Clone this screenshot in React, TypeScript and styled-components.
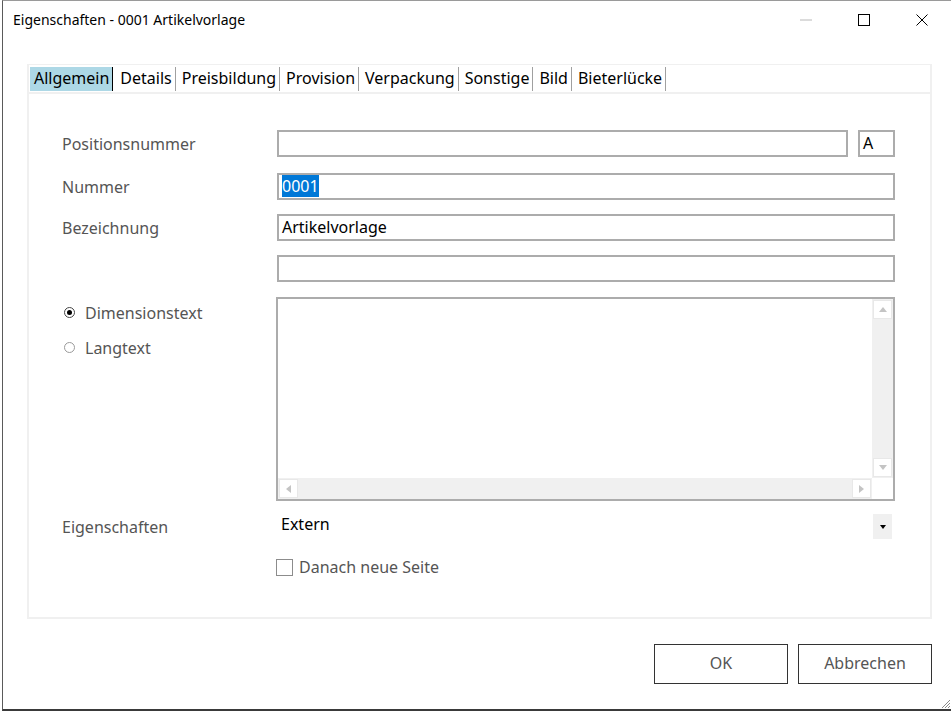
import React from "react";
import styled, { createGlobalStyle } from "styled-components";

const GlobalStyle = createGlobalStyle`
  html, body {
    margin: 0;
    padding: 0;
    background: #ffffff;
  }
  body {
    font-family: "Noto Sans", "Open Sans", sans-serif;
  }
`;

const tabs = [
  "Allgemein",
  "Details",
  "Preisbildung",
  "Provision",
  "Verpackung",
  "Sonstige",
  "Bild",
  "Bieterlücke"
];

export default function App() {
  return (
    <>
      <GlobalStyle />
      <Window>
        <TitleBar>
          <Title>Eigenschaften - 0001 Artikelvorlage</Title>
          <Controls>
            <Control>
              <svg width="12" height="2" viewBox="0 0 12 2">
                <line x1="0" y1="1" x2="12" y2="1" stroke="#b8b8b8" strokeWidth="1" />
              </svg>
            </Control>
            <Control>
              <svg width="12" height="12" viewBox="0 0 12 12">
                <rect x="0.5" y="0.5" width="11" height="11" fill="none" stroke="#000" strokeWidth="1" />
              </svg>
            </Control>
            <Control>
              <svg width="12" height="12" viewBox="0 0 12 12">
                <path d="M0.5 0.5 L11.5 11.5 M11.5 0.5 L0.5 11.5" stroke="#000" strokeWidth="1" />
              </svg>
            </Control>
          </Controls>
        </TitleBar>

        <Body>
          <Panel>
            <TabStrip>
              {tabs.map((t, i) => (
                <Tab key={t} $active={i === 0}>{t}</Tab>
              ))}
            </TabStrip>

            <Content>
              <Row>
                <Label>Positionsnummer</Label>
                <FieldGroup>
                  <TextBox $grow />
                  <TextBox $width={37}>A</TextBox>
                </FieldGroup>
              </Row>
              <Row $gap={16}>
                <Label>Nummer</Label>
                <TextBox><Selected>0001</Selected></TextBox>
              </Row>
              <Row $gap={14}>
                <Label>Bezeichnung</Label>
                <TextBox>Artikelvorlage</TextBox>
              </Row>
              <Row $gap={14}>
                <Label />
                <TextBox />
              </Row>

              <TextRow>
                <RadioList>
                  <RadioItem>
                    <Radio $checked />
                    Dimensionstext
                  </RadioItem>
                  <RadioItem>
                    <Radio />
                    Langtext
                  </RadioItem>
                </RadioList>
                <Memo>
                  <MemoText />
                  <VScroll>
                    <ArrowButton>
                      <svg width="8" height="5" viewBox="0 0 8 5"><path d="M4 0 L8 5 L0 5 Z" fill="#c4c4c4" /></svg>
                    </ArrowButton>
                    <ArrowButton>
                      <svg width="8" height="5" viewBox="0 0 8 5"><path d="M0 0 L8 0 L4 5 Z" fill="#c4c4c4" /></svg>
                    </ArrowButton>
                  </VScroll>
                  <HScroll>
                    <ArrowButton>
                      <svg width="5" height="8" viewBox="0 0 5 8"><path d="M5 0 L5 8 L0 4 Z" fill="#c4c4c4" /></svg>
                    </ArrowButton>
                    <ArrowButton>
                      <svg width="5" height="8" viewBox="0 0 5 8"><path d="M0 0 L5 4 L0 8 Z" fill="#c4c4c4" /></svg>
                    </ArrowButton>
                  </HScroll>
                  <Corner />
                </Memo>
              </TextRow>

              <ComboRow>
                <Label>Eigenschaften</Label>
                <Combo>
                  <ComboValue>Extern</ComboValue>
                  <ComboButton>
                    <svg width="6" height="4" viewBox="0 0 6 4"><path d="M0 0 L6 0 L3 4 Z" fill="#000" /></svg>
                  </ComboButton>
                </Combo>
              </ComboRow>

              <CheckRow>
                <Label />
                <CheckLabel>
                  <CheckBox />
                  Danach neue Seite
                </CheckLabel>
              </CheckRow>
            </Content>
          </Panel>
        </Body>

        <Footer>
          <Button>OK</Button>
          <Button>Abbrechen</Button>
        </Footer>

        <Grip>
          <svg width="11" height="11" viewBox="0 0 11 11">
            <path d="M10 2 L2 10 M10 5 L5 10 M10 8 L8 10" stroke="#8a8a8a" strokeWidth="1" />
          </svg>
        </Grip>
      </Window>
    </>
  );
}

const Window = styled.div`
  position: relative;
  box-sizing: border-box;
  margin-left: 2px;
  width: 949px;
  height: 711px;
  background: #ffffff;
  border-left: 1px solid #5a5a5a;
  border-top: 1px solid #9a9a9a;
  border-bottom: 2px solid #3a3a3a;
  display: flex;
  flex-direction: column;
`;

const TitleBar = styled.div`
  height: 38px;
  display: flex;
  align-items: center;
  justify-content: space-between;
  padding-left: 10px;
`;

const Title = styled.div`
  font-size: 14px;
  color: #000;
  margin-top: -2px;
`;

const Controls = styled.div`
  display: flex;
  align-self: stretch;
`;

const Control = styled.div`
  width: 58px;
  display: flex;
  align-items: center;
  justify-content: center;
`;

const Body = styled.div`
  padding: 25px 20px 0 24px;
`;

const Panel = styled.div`
  box-sizing: border-box;
  width: 905px;
  height: 555px;
  border: 2px solid #f0f0f0;
  border-top-width: 1px;
  display: flex;
  flex-direction: column;
`;

const TabStrip = styled.div`
  display: flex;
  align-items: flex-start;
  height: 29px;
  padding-left: 1px;
  padding-top: 2px;
  box-sizing: border-box;
  border-bottom: 2px solid #f0f0f0;
`;

const Tab = styled.div<{ $active?: boolean }>`
  height: 24px;
  line-height: 22px;
  padding: 0 3px 0 4px;
  font-size: 16px;
  color: #000;
  background: ${p => (p.$active ? "#add8e6" : "transparent")};
  border-right: 1px solid ${p => (p.$active ? "#000" : "#a0a0a0")};
  margin-right: ${p => (p.$active ? 3 : 2)}px;
`;

const Content = styled.div`
  padding: 36px 34px 0 33px;
  display: flex;
  flex-direction: column;
`;

const Row = styled.div<{ $gap?: number }>`
  display: grid;
  grid-template-columns: 215px 618px;
  align-items: center;
  margin-top: ${p => p.$gap ?? 0}px;
`;

const Label = styled.div`
  font-size: 16px;
  color: #555555;
`;

const FieldGroup = styled.div`
  display: flex;
  gap: 10px;
`;

const TextBox = styled.div<{ $grow?: boolean; $width?: number }>`
  box-sizing: border-box;
  height: 27px;
  ${p => (p.$width ? `width: ${p.$width}px;` : "")}
  ${p => (p.$grow ? "flex: 1;" : "")}
  border: 2px solid #acacac;
  background: #fff;
  font-size: 16px;
  line-height: 23px;
  color: #000;
  padding-left: 3px;
  white-space: nowrap;
  overflow: hidden;
`;

const Selected = styled.span`
  background: #0078d7;
  color: #fff;
`;

const TextRow = styled.div`
  display: grid;
  grid-template-columns: 214px 619px;
  margin-top: 15px;
`;

const RadioList = styled.div`
  display: flex;
  flex-direction: column;
  gap: 12px;
  padding-top: 4px;
  padding-left: 2px;
`;

const RadioItem = styled.div`
  display: flex;
  align-items: center;
  gap: 10px;
  font-size: 16px;
  color: #555555;
  height: 23px;
`;

const Radio = styled.span<{ $checked?: boolean }>`
  box-sizing: border-box;
  width: 11px;
  height: 11px;
  border-radius: 50%;
  border: 1px solid ${p => (p.$checked ? "#444" : "#9a9a9a")};
  display: inline-flex;
  align-items: center;
  justify-content: center;
  &::after {
    content: "";
    width: 5px;
    height: 5px;
    border-radius: 50%;
    background: ${p => (p.$checked ? "#000" : "transparent")};
  }
`;

const Memo = styled.div`
  box-sizing: border-box;
  height: 204px;
  border: 2px solid #acacac;
  display: grid;
  grid-template-columns: 1fr 21px;
  grid-template-rows: 1fr 21px;
`;

const MemoText = styled.div`
  background: #fff;
`;

const VScroll = styled.div`
  background: #f0f0f0;
  display: flex;
  flex-direction: column;
  justify-content: space-between;
  padding: 1px;
`;

const HScroll = styled.div`
  background: #f0f0f0;
  display: flex;
  justify-content: space-between;
  padding: 1px;
`;

const ArrowButton = styled.div`
  box-sizing: border-box;
  width: 19px;
  height: 19px;
  background: #fff;
  border: 1px solid #e8e8e8;
  display: flex;
  align-items: center;
  justify-content: center;
`;

const Corner = styled.div`
  background: #fff;
`;

const ComboRow = styled.div`
  display: grid;
  grid-template-columns: 215px 618px;
  align-items: center;
  margin-top: 13px;
  height: 25px;
`;

const Combo = styled.div`
  display: flex;
  align-items: center;
  justify-content: space-between;
  padding-right: 3px;
`;

const ComboValue = styled.div`
  font-size: 16px;
  color: #000;
  padding-left: 4px;
  margin-top: -6px;
`;

const ComboButton = styled.div`
  width: 19px;
  height: 25px;
  background: #f0f0f0;
  display: flex;
  align-items: center;
  justify-content: center;
`;

const CheckRow = styled.div`
  display: grid;
  grid-template-columns: 214px 619px;
  align-items: center;
  margin-top: 17px;
`;

const CheckLabel = styled.div`
  display: flex;
  align-items: center;
  gap: 6px;
  font-size: 16px;
  color: #555555;
`;

const CheckBox = styled.span`
  box-sizing: border-box;
  width: 17px;
  height: 17px;
  border: 1px solid #8c8c8c;
  background: #fff;
`;

const Footer = styled.div`
  display: flex;
  justify-content: flex-end;
  gap: 10px;
  padding: 25px 19px 0 0;
`;

const Button = styled.div`
  box-sizing: border-box;
  width: 134px;
  height: 40px;
  border: 1px solid #333;
  display: flex;
  align-items: center;
  justify-content: center;
  font-size: 16px;
  color: #555555;
  padding-bottom: 3px;
`;

const Grip = styled.div`
  position: absolute;
  right: 0;
  bottom: 0;
  width: 11px;
  height: 11px;
  line-height: 0;
`;
